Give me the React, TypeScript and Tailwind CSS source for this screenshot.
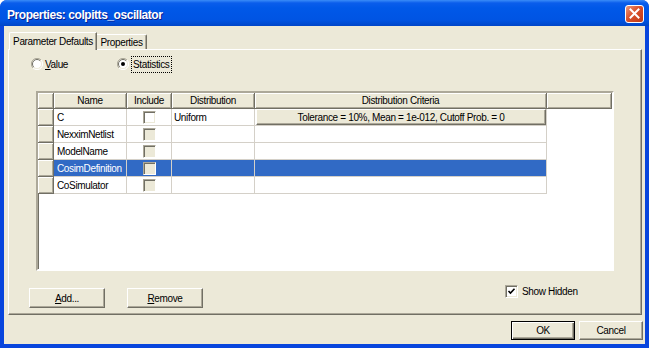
const FONT = "font-['Liberation_Sans',Arial,sans-serif]";

function Radio({ checked }: { checked?: boolean }) {
  return (
    <svg width="12" height="12" viewBox="0 0 12 12" className="shrink-0">
      <circle cx="6" cy="6" r="5" fill="#fff" />
      <path d="M10 2A5.6 5.6 0 0 0 2 10" fill="none" stroke="#ACA899" strokeWidth="1" />
      <path d="M2 10A5.6 5.6 0 0 0 10 2" fill="none" stroke="#fff" strokeWidth="1" />
      <path d="M9.2 2.8A4.5 4.5 0 0 0 2.8 9.2" fill="none" stroke="#716F64" strokeWidth="1" />
      <path d="M2.8 9.2A4.5 4.5 0 0 0 9.2 2.8" fill="none" stroke="#ECE9D8" strokeWidth="1" />
      {checked && <circle cx="6" cy="6" r="2" fill="#000" />}
    </svg>
  );
}

function Check({ checked, disabled }: { checked?: boolean; disabled?: boolean }) {
  return (
    <span
      className={`flex items-center justify-center w-[13px] h-[13px] border border-t-[#ACA899] border-l-[#ACA899] border-r-white border-b-white shadow-[inset_1px_1px_0_#716F64,inset_-1px_-1px_0_#ECE9D8] ${
        disabled ? 'bg-[#ECE9D8]' : 'bg-white'
      }`}
    >
      {checked && (
        <svg width="9" height="9" viewBox="0 0 9 9">
          <path d="M1.5 4l2 2 4-4.2" fill="none" stroke="#000" strokeWidth="1.6" />
        </svg>
      )}
    </span>
  );
}

function Button({ children, wide, isDefault }: { children: React.ReactNode; wide?: boolean; isDefault?: boolean }) {
  return (
    <div
      className={`flex items-center justify-center bg-[#ECE9D8] text-[10px] text-black ${
        wide ? 'w-[76px] h-[20px]' : 'w-[64px] h-[19px]'
      } ${
        isDefault
          ? 'border border-black shadow-[inset_1px_1px_0_#fff,inset_-1px_-1px_0_#716F64,inset_-2px_-2px_0_#ACA899]'
          : 'border border-t-white border-l-white border-r-[#716F64] border-b-[#716F64] shadow-[inset_-1px_-1px_0_#ACA899]'
      }`}
    >
      {children}
    </div>
  );
}

const hdr =
  'flex items-center justify-center bg-[#ECE9D8] border-r border-b border-[#716F64] shadow-[inset_1px_1px_0_#fff,inset_-1px_-1px_0_#ACA899] text-[10px]';

const rows = [
  { name: 'C', dist: 'Uniform', criteria: 'Tolerance = 10%, Mean = 1e-012, Cutoff Prob. = 0', enabled: true },
  { name: 'NexximNetlist' },
  { name: 'ModelName' },
  { name: 'CosimDefinition', selected: true },
  { name: 'CoSimulator' },
] as { name: string; dist?: string; criteria?: string; enabled?: boolean; selected?: boolean }[];

function Grid() {
  return (
    <div className="w-[578px] h-[180px] border-2 border-t-[#ACA899] border-l-[#ACA899] border-r-white border-b-white bg-white shadow-[inset_1px_1px_0_#716F64]">
      <div className="flex h-[16px]">
        <div className={`${hdr} w-[16px]`} />
        <div className={`${hdr} w-[73px]`}>Name</div>
        <div className={`${hdr} w-[45px]`}>Include</div>
        <div className={`${hdr} w-[83px]`}>Distribution</div>
        <div className={`${hdr} w-[292px]`}>Distribution Criteria</div>
        <div className={`${hdr} w-[65px]`} />
      </div>
      {rows.map((r) => {
        const cell = `h-full border-r border-b border-[#D4D0C8] whitespace-nowrap overflow-hidden ${
          r.selected ? 'bg-[#316AC5] text-white' : 'bg-white text-black'
        }`;
        return (
          <div key={r.name} className="flex h-[17px] text-[10px]">
            <div className={`${hdr} w-[16px]`} />
            <div className={`${cell} w-[73px] flex items-center pl-[3px]`}>{r.name}</div>
            <div className={`${cell} w-[45px] flex items-center justify-center`}>
              <Check disabled={!r.enabled} />
            </div>
            <div className={`${cell} w-[83px] flex items-center pl-[2px]`}>{r.dist}</div>
            <div className={`${cell} w-[292px] flex items-center pl-[1px]`}>
              {r.criteria && (
                <div className="w-[290px] h-[16px] flex items-center justify-center bg-[#ECE9D8] text-black border border-t-white border-l-white border-r-[#716F64] border-b-[#716F64] shadow-[inset_-1px_-1px_0_#ACA899]">
                  {r.criteria}
                </div>
              )}
            </div>
          </div>
        );
      })}
    </div>
  );
}

export default function App() {
  return (
    <div
      className={`w-[649px] h-[348px] flex flex-col overflow-hidden rounded-t-[7px] bg-[#0845DD] ${FONT} tracking-[-0.35px] text-black`}
    >
      {/* title bar */}
      <div className="h-[26px] flex items-center justify-between pl-[7px] pr-[5px] bg-[linear-gradient(to_bottom,#3A8CF8_0px,#0A5DEB_3px,#0058E8_8px,#0054E3_20px,#0046C8_26px)]">
        <span className="text-white font-bold text-[12px] tracking-[-0.45px] pt-[3px] [text-shadow:1px_1px_0_#0A1E8C]">
          Properties: colpitts_oscillator
        </span>
        <div className="w-[19px] h-[18px] mt-[1px] rounded-[3px] border border-white flex items-center justify-center bg-[linear-gradient(135deg,#EC9A7E,#D9502B_45%,#BF3A16)]">
          <svg width="11" height="11" viewBox="0 0 11 11">
            <path d="M1.5 1.5l8 8M9.5 1.5l-8 8" stroke="#fff" strokeWidth="2" strokeLinecap="square" />
          </svg>
        </div>
      </div>

      {/* body */}
      <div className="flex-1 mx-[4px] mb-[4px] bg-[#ECE9D8] flex flex-col pt-[6px]">
        {/* tabs */}
        <div className="flex items-end h-[17px] pl-[5px] text-[10px] whitespace-nowrap">
          <div className="relative z-10 -mb-px h-[18px] w-[88px] flex items-center justify-center bg-[#ECE9D8] border-l border-t border-white rounded-tl-[2px] border-r border-r-[#716F64] shadow-[inset_-1px_0_0_#ACA899]">
            Parameter Defaults
          </div>
          <div className="h-[15px] w-[50px] flex items-center justify-center border-t border-white border-r border-r-[#716F64] shadow-[inset_-1px_0_0_#ACA899] rounded-tr-[2px] pt-[1px]">
            Properties
          </div>
        </div>

        {/* panel */}
        <div className="h-[266px] ml-[4px] mr-[3px] border border-t-white border-l-white border-r-[#716F64] border-b-[#716F64] shadow-[inset_-1px_-1px_0_#ACA899] flex flex-col">
          <div className="flex items-center h-[14px] mt-[7px] pl-[22px] text-[10px]">
            <Radio />
            <span className="ml-[2px] w-[72px]">
              <u>V</u>alue
            </span>
            <Radio checked />
            <span className="ml-[3px] px-[1px] outline outline-1 outline-dotted outline-black">Statistics</span>
          </div>

          <div className="mt-[20px] ml-[27px]">
            <Grid />
          </div>

          <div className="flex items-start mt-[13px] pl-[20px]">
            <div className="mt-[4px]">
              <Button wide>
                <u>A</u>dd...
              </Button>
            </div>
            <div className="mt-[4px] ml-[22px]">
              <Button wide>
                <u>R</u>emove
              </Button>
            </div>
            <div className="ml-[302px] flex items-center text-[10px]">
              <Check checked />
              <span className="ml-[4px]">Show Hidden</span>
            </div>
          </div>
        </div>

        {/* dialog buttons */}
        <div className="flex justify-end mt-[6px] pr-[2px] gap-[4px]">
          <Button isDefault>OK</Button>
          <Button>Cancel</Button>
        </div>
      </div>
    </div>
  );
}
